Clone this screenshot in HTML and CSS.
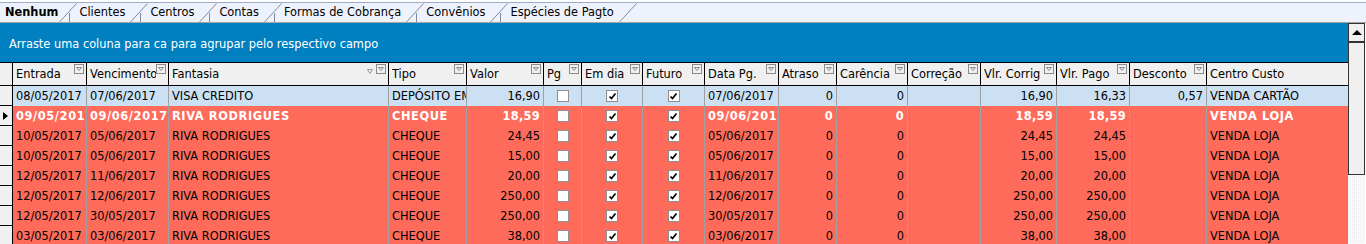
FILE: index.html
```html
<!DOCTYPE html>
<html lang="pt-BR">
<head>
    <meta charset="UTF-8">
    <title>Contas a Receber</title>
    <link rel="stylesheet" href="styles.css">
</head>
<body>

<div class="tabs">
    <div class="tab-row">
        <span class="tab active">Nenhum</span>
        <svg class="slant" viewBox="0 0 18 19"><path d="M0.5 19 L17.5 0.5 M10.5 10 V19"/></svg>
        <span class="tab">Clientes</span>
        <svg class="slant" viewBox="0 0 18 19"><path d="M0.5 19 L17.5 0.5 M10.5 10 V19"/></svg>
        <span class="tab">Centros</span>
        <svg class="slant" viewBox="0 0 18 19"><path d="M0.5 19 L17.5 0.5 M10.5 10 V19"/></svg>
        <span class="tab">Contas</span>
        <svg class="slant" viewBox="0 0 18 19"><path d="M0.5 19 L17.5 0.5 M10.5 10 V19"/></svg>
        <span class="tab">Formas de Cobrança</span>
        <svg class="slant" viewBox="0 0 18 19"><path d="M0.5 19 L17.5 0.5 M10.5 10 V19"/></svg>
        <span class="tab">Convênios</span>
        <svg class="slant" viewBox="0 0 18 19"><path d="M0.5 19 L17.5 0.5 M10.5 10 V19"/></svg>
        <span class="tab">Espécies de Pagto</span>
        <svg class="slant" viewBox="0 0 18 19"><path d="M0.5 19 L17.5 0.5"/></svg>
    </div>
</div>

<div class="main">
    <div class="grid">
        <div class="group-panel">Arraste uma coluna para ca para agrupar pelo respectivo campo</div>

        <div class="row head">
            <div class="ind"></div>
            <div class="hc"><span class="ht">Entrada</span><svg class="flt" viewBox="0 0 10 10"><rect x="0.5" y="0.5" width="9" height="9"/><path d="M2.5 3.5 H7.5 L5 6.5 Z"/></svg></div>
            <div class="hc"><span class="ht">Vencimento</span><svg class="flt" viewBox="0 0 10 10"><rect x="0.5" y="0.5" width="9" height="9"/><path d="M2.5 3.5 H7.5 L5 6.5 Z"/></svg></div>
            <div class="hc"><span class="ht">Fantasia</span><svg class="sort" viewBox="0 0 6 5"><path d="M0.5 0.5 H5.5 L3 4.5 Z"/></svg><svg class="flt" viewBox="0 0 10 10"><rect x="0.5" y="0.5" width="9" height="9"/><path d="M2.5 3.5 H7.5 L5 6.5 Z"/></svg></div>
            <div class="hc"><span class="ht">Tipo</span><svg class="flt" viewBox="0 0 10 10"><rect x="0.5" y="0.5" width="9" height="9"/><path d="M2.5 3.5 H7.5 L5 6.5 Z"/></svg></div>
            <div class="hc"><span class="ht">Valor</span><svg class="flt" viewBox="0 0 10 10"><rect x="0.5" y="0.5" width="9" height="9"/><path d="M2.5 3.5 H7.5 L5 6.5 Z"/></svg></div>
            <div class="hc"><span class="ht">Pg</span><svg class="flt" viewBox="0 0 10 10"><rect x="0.5" y="0.5" width="9" height="9"/><path d="M2.5 3.5 H7.5 L5 6.5 Z"/></svg></div>
            <div class="hc"><span class="ht">Em dia</span><svg class="flt" viewBox="0 0 10 10"><rect x="0.5" y="0.5" width="9" height="9"/><path d="M2.5 3.5 H7.5 L5 6.5 Z"/></svg></div>
            <div class="hc"><span class="ht">Futuro</span><svg class="flt" viewBox="0 0 10 10"><rect x="0.5" y="0.5" width="9" height="9"/><path d="M2.5 3.5 H7.5 L5 6.5 Z"/></svg></div>
            <div class="hc"><span class="ht">Data Pg.</span><svg class="flt" viewBox="0 0 10 10"><rect x="0.5" y="0.5" width="9" height="9"/><path d="M2.5 3.5 H7.5 L5 6.5 Z"/></svg></div>
            <div class="hc"><span class="ht">Atraso</span><svg class="flt" viewBox="0 0 10 10"><rect x="0.5" y="0.5" width="9" height="9"/><path d="M2.5 3.5 H7.5 L5 6.5 Z"/></svg></div>
            <div class="hc"><span class="ht">Carência</span><svg class="flt" viewBox="0 0 10 10"><rect x="0.5" y="0.5" width="9" height="9"/><path d="M2.5 3.5 H7.5 L5 6.5 Z"/></svg></div>
            <div class="hc"><span class="ht">Correção</span><svg class="flt" viewBox="0 0 10 10"><rect x="0.5" y="0.5" width="9" height="9"/><path d="M2.5 3.5 H7.5 L5 6.5 Z"/></svg></div>
            <div class="hc"><span class="ht">Vlr. Corrig</span><svg class="flt" viewBox="0 0 10 10"><rect x="0.5" y="0.5" width="9" height="9"/><path d="M2.5 3.5 H7.5 L5 6.5 Z"/></svg></div>
            <div class="hc"><span class="ht">Vlr. Pago</span><svg class="flt" viewBox="0 0 10 10"><rect x="0.5" y="0.5" width="9" height="9"/><path d="M2.5 3.5 H7.5 L5 6.5 Z"/></svg></div>
            <div class="hc"><span class="ht">Desconto</span><svg class="flt" viewBox="0 0 10 10"><rect x="0.5" y="0.5" width="9" height="9"/><path d="M2.5 3.5 H7.5 L5 6.5 Z"/></svg></div>
            <div class="hc last"><span class="ht">Centro Custo</span></div>
        </div>

        <div class="row blue">
            <div class="ind"></div>
            <div class="c">08/05/2017</div>
            <div class="c">07/06/2017</div>
            <div class="c">VISA CREDITO</div>
            <div class="c">DEPÓSITO EM ESPÉCIE</div>
            <div class="c num">16,90</div>
            <div class="c mid"><span class="chk"></span></div>
            <div class="c mid"><span class="chk"><svg viewBox="0 0 9 9"><path d="M1.5 4.5 L3.5 6.5 L7.5 1.5"/></svg></span></div>
            <div class="c mid"><span class="chk"><svg viewBox="0 0 9 9"><path d="M1.5 4.5 L3.5 6.5 L7.5 1.5"/></svg></span></div>
            <div class="c">07/06/2017</div>
            <div class="c num">0</div>
            <div class="c num">0</div>
            <div class="c"></div>
            <div class="c num">16,90</div>
            <div class="c num">16,33</div>
            <div class="c num">0,57</div>
            <div class="c last">VENDA CARTÃO</div>
        </div>

        <div class="row red current">
            <div class="ind"><span class="arrow"></span></div>
            <div class="c">09/05/2017</div>
            <div class="c">09/06/2017</div>
            <div class="c">RIVA RODRIGUES</div>
            <div class="c">CHEQUE</div>
            <div class="c num">18,59</div>
            <div class="c mid"><span class="chk"></span></div>
            <div class="c mid"><span class="chk"><svg viewBox="0 0 9 9"><path d="M1.5 4.5 L3.5 6.5 L7.5 1.5"/></svg></span></div>
            <div class="c mid"><span class="chk"><svg viewBox="0 0 9 9"><path d="M1.5 4.5 L3.5 6.5 L7.5 1.5"/></svg></span></div>
            <div class="c">09/06/2017</div>
            <div class="c num">0</div>
            <div class="c num">0</div>
            <div class="c"></div>
            <div class="c num">18,59</div>
            <div class="c num">18,59</div>
            <div class="c num"></div>
            <div class="c last">VENDA LOJA</div>
        </div>

        <div class="row red">
            <div class="ind"></div>
            <div class="c">10/05/2017</div>
            <div class="c">05/06/2017</div>
            <div class="c">RIVA RODRIGUES</div>
            <div class="c">CHEQUE</div>
            <div class="c num">24,45</div>
            <div class="c mid"><span class="chk"></span></div>
            <div class="c mid"><span class="chk"><svg viewBox="0 0 9 9"><path d="M1.5 4.5 L3.5 6.5 L7.5 1.5"/></svg></span></div>
            <div class="c mid"><span class="chk"><svg viewBox="0 0 9 9"><path d="M1.5 4.5 L3.5 6.5 L7.5 1.5"/></svg></span></div>
            <div class="c">05/06/2017</div>
            <div class="c num">0</div>
            <div class="c num">0</div>
            <div class="c"></div>
            <div class="c num">24,45</div>
            <div class="c num">24,45</div>
            <div class="c num"></div>
            <div class="c last">VENDA LOJA</div>
        </div>

        <div class="row red">
            <div class="ind"></div>
            <div class="c">10/05/2017</div>
            <div class="c">05/06/2017</div>
            <div class="c">RIVA RODRIGUES</div>
            <div class="c">CHEQUE</div>
            <div class="c num">15,00</div>
            <div class="c mid"><span class="chk"></span></div>
            <div class="c mid"><span class="chk"><svg viewBox="0 0 9 9"><path d="M1.5 4.5 L3.5 6.5 L7.5 1.5"/></svg></span></div>
            <div class="c mid"><span class="chk"><svg viewBox="0 0 9 9"><path d="M1.5 4.5 L3.5 6.5 L7.5 1.5"/></svg></span></div>
            <div class="c">05/06/2017</div>
            <div class="c num">0</div>
            <div class="c num">0</div>
            <div class="c"></div>
            <div class="c num">15,00</div>
            <div class="c num">15,00</div>
            <div class="c num"></div>
            <div class="c last">VENDA LOJA</div>
        </div>

        <div class="row red">
            <div class="ind"></div>
            <div class="c">12/05/2017</div>
            <div class="c">11/06/2017</div>
            <div class="c">RIVA RODRIGUES</div>
            <div class="c">CHEQUE</div>
            <div class="c num">20,00</div>
            <div class="c mid"><span class="chk"></span></div>
            <div class="c mid"><span class="chk"><svg viewBox="0 0 9 9"><path d="M1.5 4.5 L3.5 6.5 L7.5 1.5"/></svg></span></div>
            <div class="c mid"><span class="chk"><svg viewBox="0 0 9 9"><path d="M1.5 4.5 L3.5 6.5 L7.5 1.5"/></svg></span></div>
            <div class="c">11/06/2017</div>
            <div class="c num">0</div>
            <div class="c num">0</div>
            <div class="c"></div>
            <div class="c num">20,00</div>
            <div class="c num">20,00</div>
            <div class="c num"></div>
            <div class="c last">VENDA LOJA</div>
        </div>

        <div class="row red">
            <div class="ind"></div>
            <div class="c">12/05/2017</div>
            <div class="c">12/06/2017</div>
            <div class="c">RIVA RODRIGUES</div>
            <div class="c">CHEQUE</div>
            <div class="c num">250,00</div>
            <div class="c mid"><span class="chk"></span></div>
            <div class="c mid"><span class="chk"><svg viewBox="0 0 9 9"><path d="M1.5 4.5 L3.5 6.5 L7.5 1.5"/></svg></span></div>
            <div class="c mid"><span class="chk"><svg viewBox="0 0 9 9"><path d="M1.5 4.5 L3.5 6.5 L7.5 1.5"/></svg></span></div>
            <div class="c">12/06/2017</div>
            <div class="c num">0</div>
            <div class="c num">0</div>
            <div class="c"></div>
            <div class="c num">250,00</div>
            <div class="c num">250,00</div>
            <div class="c num"></div>
            <div class="c last">VENDA LOJA</div>
        </div>

        <div class="row red">
            <div class="ind"></div>
            <div class="c">12/05/2017</div>
            <div class="c">30/05/2017</div>
            <div class="c">RIVA RODRIGUES</div>
            <div class="c">CHEQUE</div>
            <div class="c num">250,00</div>
            <div class="c mid"><span class="chk"></span></div>
            <div class="c mid"><span class="chk"><svg viewBox="0 0 9 9"><path d="M1.5 4.5 L3.5 6.5 L7.5 1.5"/></svg></span></div>
            <div class="c mid"><span class="chk"><svg viewBox="0 0 9 9"><path d="M1.5 4.5 L3.5 6.5 L7.5 1.5"/></svg></span></div>
            <div class="c">30/05/2017</div>
            <div class="c num">0</div>
            <div class="c num">0</div>
            <div class="c"></div>
            <div class="c num">250,00</div>
            <div class="c num">250,00</div>
            <div class="c num"></div>
            <div class="c last">VENDA LOJA</div>
        </div>

        <div class="row red">
            <div class="ind"></div>
            <div class="c">03/05/2017</div>
            <div class="c">03/06/2017</div>
            <div class="c">RIVA RODRIGUES</div>
            <div class="c">CHEQUE</div>
            <div class="c num">38,00</div>
            <div class="c mid"><span class="chk"></span></div>
            <div class="c mid"><span class="chk"><svg viewBox="0 0 9 9"><path d="M1.5 4.5 L3.5 6.5 L7.5 1.5"/></svg></span></div>
            <div class="c mid"><span class="chk"><svg viewBox="0 0 9 9"><path d="M1.5 4.5 L3.5 6.5 L7.5 1.5"/></svg></span></div>
            <div class="c">03/06/2017</div>
            <div class="c num">0</div>
            <div class="c num">0</div>
            <div class="c"></div>
            <div class="c num">38,00</div>
            <div class="c num">38,00</div>
            <div class="c num"></div>
            <div class="c last">VENDA LOJA</div>
        </div>
    </div>

    <div class="vscroll">
        <div class="sb-btn"><span class="up"></span></div>
        <div class="sb-thumb"></div>
        <div class="sb-track"></div>
    </div>
</div>

</body>
</html>
```

FILE: styles.css
```css
body {
    margin: 0;
    font-family: "DejaVu Sans", sans-serif;
    font-size: 11.4px;
    color: #000;
    background: #fff;
    overflow: hidden;
}

/* tab strip */
.tabs {
    padding-top: 2px;
    background: #fff;
}

.tab-row {
    display: flex;
    height: 19px;
    border-top: 1px solid #9eabc4;
    border-bottom: 1px solid #a3a3a3;
    background: #eef2fc;
}

.tab {
    line-height: 19px;
    padding: 0 5px 0 2px;
    white-space: nowrap;
}

.tab.active {
    font-weight: bold;
    padding-left: 5px;
    padding-right: 1px;
}

.slant {
    width: 18px;
    height: 19px;
    flex: none;
    fill: none;
    stroke: #7d8ba6;
    stroke-width: 1;
}

/* grid */
.main {
    display: flex;
}

.grid {
    width: 1348px;
    flex: none;
}

.group-panel {
    height: 39px;
    background: #0080c0;
    color: #fff;
    padding-left: 9px;
    line-height: 43px;
    box-sizing: border-box;
}

.row {
    display: grid;
    grid-template-columns: 13px 74px 82px 220px 78px 77px 38px 61px 62px 74px 58px 71px 73px 76px 73px 77px 141px;
    height: 20px;
}

.row.head {
    height: 22px;
    border-top: 1px solid #000;
    border-bottom: 1px solid #000;
    background: #f0f0f0;
}

.ind {
    background: #f0f0f0;
    border-right: 1px solid #000;
    border-bottom: 1px solid #000;
    box-sizing: border-box;
    display: flex;
    align-items: center;
    padding-left: 3px;
}

.head .ind {
    border-bottom: none;
}

.arrow {
    width: 0;
    height: 0;
    border-top: 4px solid transparent;
    border-bottom: 4px solid transparent;
    border-left: 5px solid #000;
}

.hc {
    display: flex;
    align-items: flex-start;
    border-right: 1px solid #000;
    padding: 0 2px 0 3px;
    overflow: hidden;
}

.hc.last {
    border-right: none;
}

.ht {
    flex: 1;
    min-width: 0;
    overflow: hidden;
    white-space: nowrap;
    line-height: 22px;
}

.flt {
    flex: none;
    width: 10px;
    height: 10px;
    margin-top: 1px;
    fill: none;
    stroke: #8a8a8a;
    stroke-width: 1;
}

.sort {
    flex: none;
    width: 6px;
    height: 5px;
    margin: 6px 3px 0 0;
    fill: none;
    stroke: #9a9a9a;
    stroke-width: 1;
}

.c {
    border-right: 1px solid #a0a0a0;
    padding: 0 3px;
    line-height: 20px;
    white-space: nowrap;
    overflow: hidden;
}

.c.last {
    border-right: none;
}

.c.num {
    text-align: right;
}

.c.mid {
    display: flex;
    align-items: center;
    justify-content: center;
}

.blue .c {
    background: #cce0f4;
}

.red .c {
    background: #ff6b5b;
}

.current .c {
    color: #fff;
    font-weight: bold;
    letter-spacing: 0.6px;
}

.current .c.num {
    letter-spacing: 0.3px;
}

.chk {
    width: 12px;
    height: 12px;
    box-sizing: border-box;
    border: 1px solid #8f8f8f;
    background: #fff;
    display: flex;
    align-items: center;
    justify-content: center;
}

.chk svg {
    width: 9px;
    height: 9px;
    fill: none;
    stroke: #000;
    stroke-width: 1.7;
}

/* vertical scrollbar */
.vscroll {
    width: 17px;
    flex: none;
    display: flex;
    flex-direction: column;
    height: 221px;
}

.sb-btn {
    height: 17px;
    border: 1px solid #333;
    border-bottom-width: 2px;
    background: #f0f0f0;
    display: flex;
    align-items: center;
    justify-content: center;
}

.up {
    width: 0;
    height: 0;
    border-left: 5px solid transparent;
    border-right: 5px solid transparent;
    border-bottom: 5px solid #000;
}

.sb-thumb {
    height: 131px;
    border: 1px solid #333;
    border-top: none;
    background: #f0f0f0;
}

.sb-track {
    flex: 1;
    background-color: #fbfbfb;
    background-image: linear-gradient(45deg, #ececec 25%, transparent 25%, transparent 75%, #ececec 75%);
    background-size: 2px 2px;
}
```
